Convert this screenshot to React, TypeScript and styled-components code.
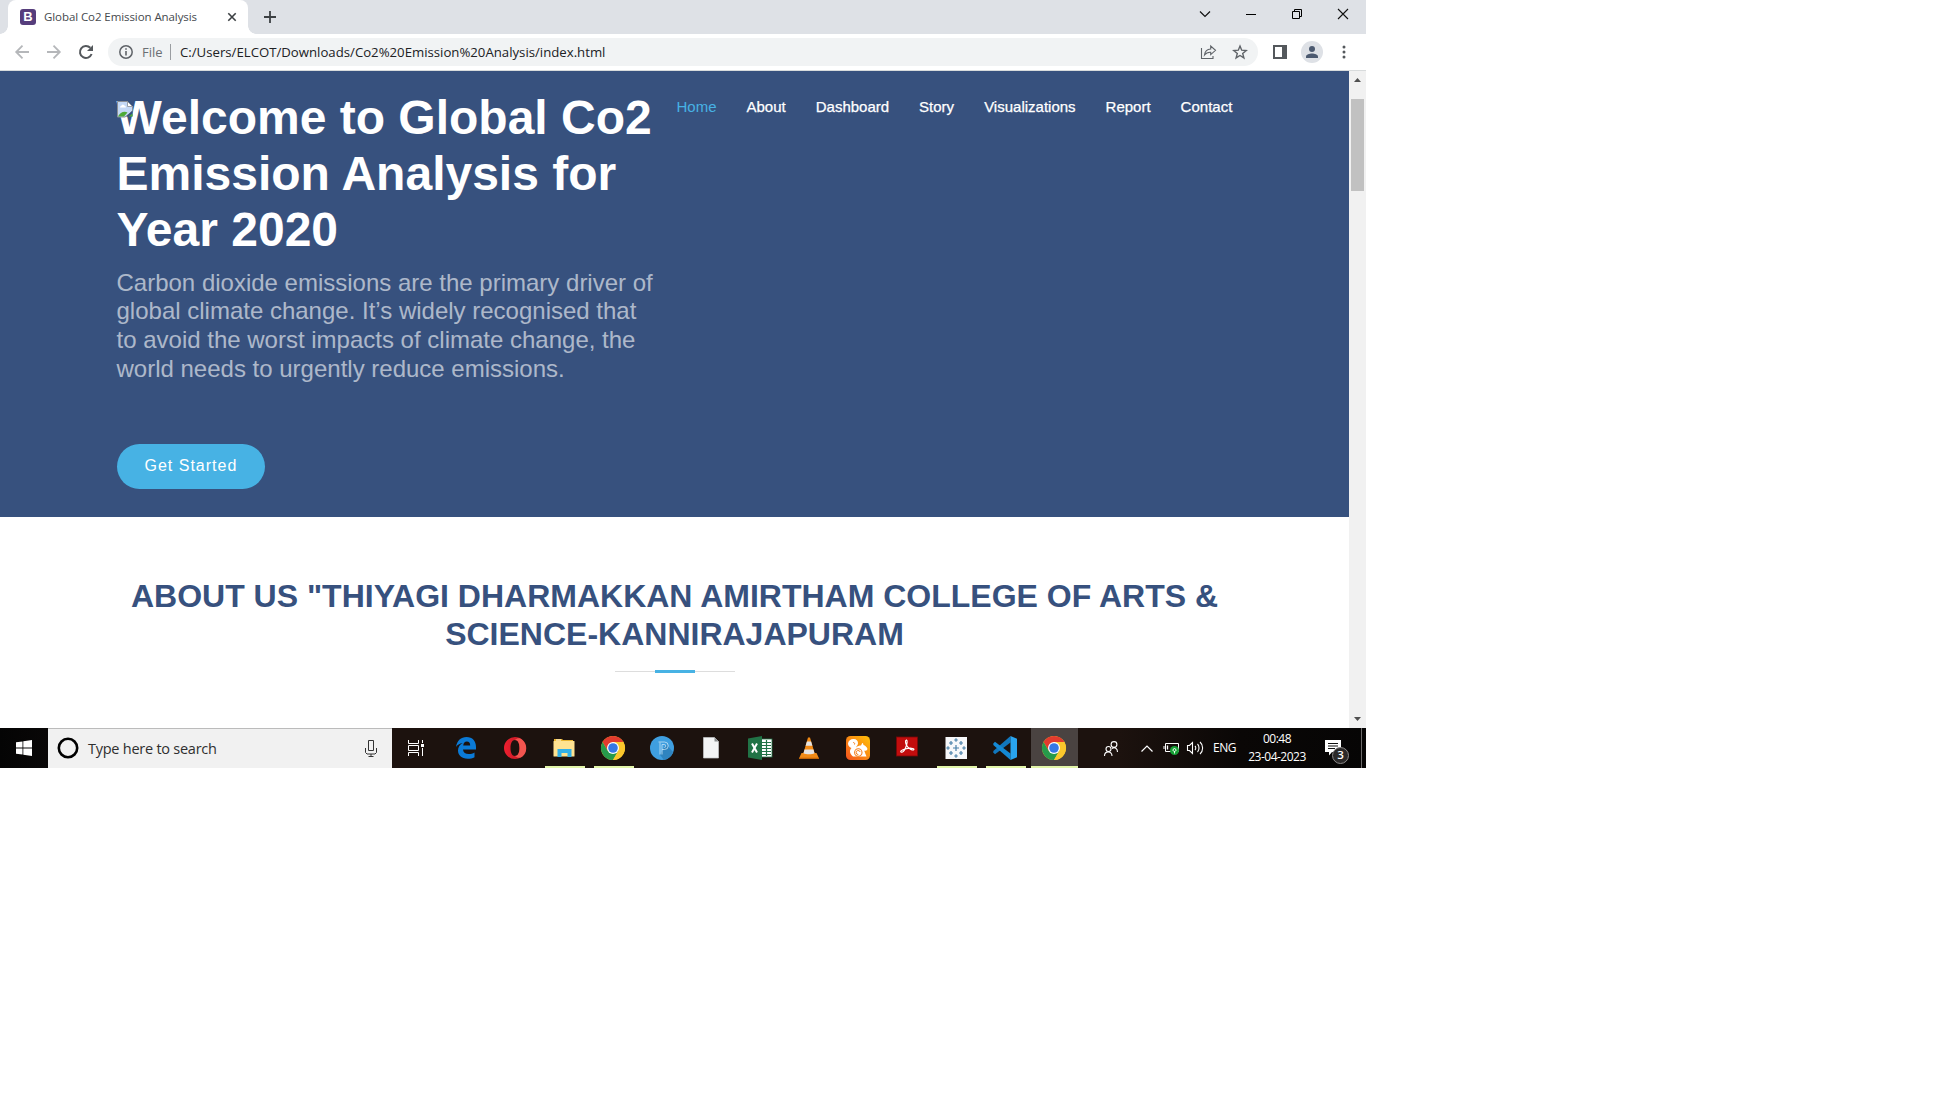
import React from "react";
import styled, { createGlobalStyle } from "styled-components";

const Global = createGlobalStyle`
  * { box-sizing: border-box; }
  body { margin: 0; background: #fff; }
  svg { display: block; flex: none; overflow: visible; }
`;

const UI = `"Open Sans", "Noto Sans", sans-serif`;
const PAGE = `"Liberation Sans", Arial, sans-serif`;

const Desktop = styled.div`
  width: 1366px;
  height: 768px;
  display: flex;
  flex-direction: column;
  overflow: hidden;
  font-family: ${UI};
`;

/* ---------- browser chrome ---------- */
const TabStrip = styled.div`
  height: 34px;
  flex: none;
  background: #dee1e6;
  display: flex;
  align-items: stretch;
  padding-left: 8px;
`;
const Tab = styled.div`
  position: relative;
  width: 240px;
  background: #fff;
  border-radius: 8px 8px 0 0;
  display: flex;
  align-items: center;
  padding: 0 12px;
  &::before,
  &::after {
    content: "";
    position: absolute;
    bottom: 0;
    width: 8px;
    height: 8px;
  }
  &::before {
    left: -8px;
    background: radial-gradient(circle at 0 0, transparent 7.5px, #fff 8px);
  }
  &::after {
    right: -8px;
    background: radial-gradient(circle at 100% 0, transparent 7.5px, #fff 8px);
  }
`;
const Favicon = styled.span`
  width: 16px;
  height: 16px;
  border-radius: 3px;
  background: #563d7c;
  color: #fff;
  font: bold 13px/16px ${PAGE};
  text-align: center;
`;
const TabTitle = styled.span`
  margin-left: 8px;
  flex: 1;
  font-size: 11.5px;
  letter-spacing: -0.08px;
  line-height: 16px;
  color: #45494d;
  white-space: nowrap;
`;
const NewTab = styled.div`
  display: flex;
  align-items: center;
  margin-left: 16px;
`;
const WindowButtons = styled.div`
  margin-left: auto;
  display: flex;
  height: 28px;
  & > span {
    width: 46px;
    display: flex;
    align-items: center;
    justify-content: center;
  }
`;
const Toolbar = styled.div`
  height: 37px;
  flex: none;
  display: flex;
  align-items: center;
  background: #fff;
  border-bottom: 1px solid #d8dbdc;
  padding: 0 15px;
`;
const NavIcons = styled.div`
  display: flex;
  gap: 18px;
  width: 93px;
`;
const Omnibox = styled.div`
  width: 1150px;
  height: 28px;
  border-radius: 14px;
  background: #f1f3f4;
  display: flex;
  align-items: center;
  padding: 0 11px;
`;
const Scheme = styled.span`
  margin-left: 9px;
  width: 28px;
  font-size: 13px;
  letter-spacing: 0;
  color: #6b6f73;
`;
const Divider = styled.span`
  width: 1px;
  height: 16px;
  background: #9a9da1;
`;
const Url = styled.span`
  margin-left: 9px;
  flex: 1;
  font-size: 13.2px;
  letter-spacing: 0;
  color: #202124;
`;
const OmniActions = styled.div`
  display: flex;
  gap: 16px;
`;
const ToolbarEnd = styled.div`
  display: flex;
  align-items: center;
  margin-left: 15px;
`;
const Avatar = styled.span`
  width: 22px;
  height: 22px;
  margin: 0 19px 0 14px;
  border-radius: 50%;
  background: #dee1e6;
  display: flex;
  align-items: center;
  justify-content: center;
`;

/* ---------- web page ---------- */
const Viewport = styled.div`
  height: 657px;
  flex: none;
  display: flex;
`;
const Page = styled.main`
  width: 1349px;
  font-family: ${PAGE};
  background: #fff;
`;
const Hero = styled.section`
  height: 446px;
  background: #37517e;
  display: flex;
  padding: 19px 116px 0 116.5px;
`;
const HeroCopy = styled.div`
  position: relative;
  width: 546px;
`;
const BrokenImage = styled.span`
  position: absolute;
  left: 0;
  top: 11px;
`;
const HeroTitle = styled.h1`
  margin: 0 0 10.6px;
  font-size: 48px;
  line-height: 56px;
  font-weight: 700;
  color: #fff;
`;
const HeroText = styled.p`
  margin: 0;
  font-size: 24px;
  line-height: 28.8px;
  color: rgba(255, 255, 255, 0.6);
`;
const Button = styled.a`
  display: inline-block;
  margin-top: 60px;
  height: 45px;
  padding: 10px 28px;
  border-radius: 50px;
  background: #47b2e4;
  color: #fff;
  font-size: 16px;
  line-height: 24px;
  letter-spacing: 1px;
`;
const Nav = styled.nav`
  display: flex;
  margin: 8px 0 0 14px;
  gap: 30px;
  height: 18px;
`;
const NavLink = styled.a<{ $active?: boolean }>`
  font-size: 15px;
  line-height: 18px;
  -webkit-text-stroke: ${(p) => (p.$active ? "0" : "0.25px #fff")};
  color: ${(p) => (p.$active ? "#47b2e4" : "#fff")};
`;
const About = styled.section`
  display: flex;
  flex-direction: column;
  align-items: center;
  padding-top: 60px;
`;
const SectionTitle = styled.h2`
  margin: 0 0 16px;
  width: 1125px;
  font-size: 32px;
  line-height: 38.4px;
  font-weight: 700;
  text-align: center;
  color: #37517e;
`;
const Rule = styled.div`
  width: 120px;
  height: 3px;
  margin-left: 1px;
  display: flex;
  justify-content: center;
  background: linear-gradient(#fff 1px, #ddd 1px, #ddd 2px, #fff 2px);
  &::before {
    content: "";
    width: 40px;
    background: #47b2e4;
  }
`;
const Scrollbar = styled.div`
  width: 17px;
  background: #f1f1f1;
  display: flex;
  flex-direction: column;
  align-items: center;
`;
const ScrollArrow = styled.span<{ $down?: boolean }>`
  margin: ${(p) => (p.$down ? "auto 0 7px" : "7px 0 0")};
  width: 7px;
  height: 4px;
  background: #505050;
  clip-path: ${(p) => (p.$down ? "polygon(0 0, 100% 0, 50% 100%)" : "polygon(50% 0, 100% 100%, 0 100%)")};
`;
const Thumb = styled.span`
  margin-top: 17px;
  width: 13px;
  height: 92px;
  background: #c1c1c1;
`;

/* ---------- taskbar ---------- */
const Taskbar = styled.footer`
  height: 40px;
  flex: none;
  display: flex;
  background: linear-gradient(90deg, #040404 0, #090707 48px, #1c120e 392px, #1c120e 1120px, #0a0706 1240px, #060505 100%);
`;
const StartButton = styled.div`
  width: 48px;
  display: flex;
  align-items: center;
  justify-content: center;
`;
const Search = styled.div`
  width: 344px;
  background: #f1f1f1;
  border-top: 1px solid #bbb;
  display: flex;
  align-items: center;
  padding: 0 15px 1px 9px;
`;
const SearchText = styled.span`
  flex: 1;
  margin-left: 9px;
  font-size: 14.5px;
  letter-spacing: -0.25px;
  color: #2f2f2f;
`;
const TaskView = styled.div`
  width: 50px;
  display: flex;
  align-items: center;
  padding-left: 16px;
`;
const TaskButton = styled.div<{ $open?: boolean; $active?: boolean }>`
  width: ${(p) => (p.$active ? 47 : 49)}px;
  margin: ${(p) => (p.$active ? "0 1px" : "0")};
  background: ${(p) => (p.$active ? "#4a4341" : "transparent")};
  display: flex;
  flex-direction: column;
  align-items: center;
  padding-top: 8px;
  & > svg {
    margin-right: 1px;
  }
  &::after {
    content: "";
    margin-top: auto;
    width: ${(p) => (p.$active ? 47 : 40)}px;
    height: 2px;
    background: ${(p) => (p.$open || p.$active ? "#e2f5a9" : "transparent")};
  }
`;
const Tray = styled.div`
  flex: 1;
  display: flex;
  align-items: center;
  padding-left: 25px;
  color: #fff;
`;
const TrayIcon = styled.span<{ $w: number }>`
  width: ${(p) => p.$w}px;
`;
const Lang = styled.span`
  width: 33px;
  font-size: 12px;
  letter-spacing: -0.45px;
  margin-bottom: 1px;
`;
const Clock = styled.div`
  width: 62px;
  margin-right: 2px;
  text-align: center;
  font-size: 12px;
  line-height: 18px;
  letter-spacing: -0.5px;
  white-space: nowrap;
`;
const Notice = styled.div`
  position: relative;
  margin-left: 15px;
  width: 36px;
  height: 16px;
`;
const Count = styled.span`
  position: absolute;
  left: 7px;
  top: 7px;
  width: 17px;
  height: 17px;
  border-radius: 50%;
  border: 1px solid #8b8989;
  background: #2b2929;
  font-size: 11.5px;
  font-weight: 600;
  line-height: 14px;
  text-align: center;
`;
const ShowDesktop = styled.span`
  width: 1px;
  height: 40px;
  background: #6d6b6b;
`;

/* ---------- icons ---------- */
const Svg = ({ s = 24, w, h, children }: { s?: number; w?: number; h?: number; children: React.ReactNode }) => (
  <svg width={w ?? s} height={h ?? s} viewBox={`0 0 ${w ?? s} ${h ?? s}`} fill="none">
    {children}
  </svg>
);

const Back = ({ flip }: { flip?: boolean }) => (
  <Svg s={14}>
    <path d="M14 7H1.5M7.5 .7L1.2 7l6.3 6.3" stroke="#b5b7ba" strokeWidth="1.8" transform={flip ? "matrix(-1 0 0 1 14 0)" : undefined} />
  </Svg>
);
const Reload = () => (
  <Svg s={14}>
    <path d="M12.6 9A6 6 0 1 1 11.3 2.8" stroke="#54585c" strokeWidth="2" />
    <path d="M14 0v6H8z" fill="#54585c" />
  </Svg>
);
const Info = () => (
  <Svg s={14}>
    <circle cx="7" cy="7" r="6.2" stroke="#5f6368" strokeWidth="1.5" />
    <path d="M7 6v4.5M7 3.3v1.5" stroke="#5f6368" strokeWidth="1.6" />
  </Svg>
);
const Share = () => (
  <Svg w={16} h={14}>
    <path d="M.5 3v10.500h11.500V11" stroke="#5f6368" strokeWidth="1.1" />
    <path d="M3.500 10C4 6 6.300 4.200 9.700 4V1l4.800 4.300-4.800 4.300V7.200C7 7 5 8 3.500 10z" stroke="#5f6368" strokeWidth="1.1" />
  </Svg>
);
const Star = () => (
  <Svg s={14}>
    <path d="M7 1l1.700 4.200 4.500.300-3.500 2.900 1.200 4.500L7 10.500l-3.900 2.400 1.200-4.500L.8 5.500l4.500-.300z" stroke="#5f6368" strokeWidth="1.4" />
  </Svg>
);
const Chrome = () => (
  <Svg>
    <circle cx="12" cy="12" r="12" fill="#fbc72c" />
    <path d="M12 6h10.400A12 12 0 0 0 1.600 6L6.800 15z" fill="#e23b2e" />
    <path d="M1.600 6A12 12 0 0 0 12 24l5.200-9L12 12 6.800 15z" fill="#269a4b" />
    <path d="M12 24l5.200-9a6 6 0 0 0 0-6L16 6h6.400A12 12 0 0 1 12 24z" fill="#fbc72c" />
    <circle cx="12" cy="12" r="6" fill="#fff" />
    <circle cx="12" cy="12" r="4.800" fill="#3578e5" />
  </Svg>
);
const Edge = () => (
  <Svg>
    <path d="M2 11C3 4.500 7 1 12.500 1 18.500 1 22 5 22 11v2.500H9c.2 3 2.500 4.500 5.800 4.500 2.200 0 4-.5 5.700-1.500v4.700c-1.900 1-4.200 1.500-6.800 1.500C7.400 22.700 4 19 4 14.500c0-3.300 1.800-6 4.800-7.500C5.500 7.500 3.300 9 2 11zm7.200-1.500h7c0-2.700-1.200-4-3.300-4s-3.400 1.500-3.700 4z" fill="#0b7ad6" />
  </Svg>
);
const Opera = () => (
  <Svg>
    <defs>
      <linearGradient id="op" x1="0" x2="1"><stop stopColor="#f01f2f" /><stop offset="1" stopColor="#b01822" /></linearGradient>
    </defs>
    <path fillRule="evenodd" d="M12 1a11 11 0 1 0 0 22 11 11 0 0 0 0-22zm0 3c3 0 4.500 3.500 4.500 8S15 20 12 20s-4.500-3.500-4.500-8S9 4 12 4z" fill="url(#op)" />
    <path d="M12 4c3 0 4.500 3.500 4.500 8s-1.500 8-4.500 8c2 2 5 2.500 7.500.500A11 11 0 0 0 19.500 4C17 1.500 14 2 12 4z" fill="#f2554f" />
  </Svg>
);
const Explorer = () => (
  <Svg>
    <path d="M2 3h8l1 1h10v2H2z" fill="#e9b52f" />
    <path d="M4 4h5" stroke="#fff" strokeWidth="1" />
    <rect x="1.500" y="5" width="21" height="15.500" rx=".5" fill="#ffe391" />
    <path d="M5.500 21v-8h14v8h-4v-4h-6v4z" fill="#33b1e8" />
  </Svg>
);
const PApp = () => (
  <Svg>
    <circle cx="12" cy="12" r="12" fill="#3f9fe0" />
    <path d="M16 8l7 8a12 12 0 0 1-9 8l-4-5z" fill="#2f84bf" />
    <path d="M10 18.500V6.500M12 18.500V8.500M8.500 6h6a3.700 3.700 0 0 1 0 7.500H12M12 8.500h2.300a1.500 1.500 0 0 1 0 3" stroke="#c5e2f5" strokeWidth=".8" />
  </Svg>
);
const Doc = () => (
  <Svg>
    <path d="M4.500 1.500h11l4 4V22h-15z" fill="#f3f4f5" stroke="#c4c7c9" strokeWidth=".7" />
    <path d="M15.500 1.500v4h4z" fill="#8c9092" />
  </Svg>
);
const Excel = () => (
  <Svg>
    <rect x="12" y="3" width="12" height="18" fill="#fff" stroke="#217346" strokeWidth=".8" />
    <path d="M14 6.500h9M14 9.500h9M14 12.500h9M14 15.500h9M14 18.500h9M18.500 4v16" stroke="#217346" strokeWidth="1.200" />
    <path d="M0 2.500L14 0v24L0 21.500z" fill="#217346" />
    <path d="M4 7.500l5 9M9 7.500l-5 9" stroke="#fff" strokeWidth="2" />
  </Svg>
);
const Vlc = () => (
  <Svg>
    <path d="M4.500 17h15l2.500 5.500H2z" fill="#ef8a17" />
    <path d="M2 22.300h20" stroke="#c96706" strokeWidth="1.200" />
    <path d="M11 1.500h2l5 17c-2.500 1.800-9.500 1.800-12 0z" fill="#f28a15" />
    <path d="M9.900 5.500h4.200l1.300 4.200H8.600zM7.500 13.500h9l1 3.700c-2.500 1.500-8.500 1.500-11 0z" fill="#e3e3e3" />
  </Svg>
);
const Uc = () => (
  <Svg>
    <defs>
      <linearGradient id="uc" x1="0" x2="1" y1="1" y2="0"><stop stopColor="#f4511e" /><stop offset="1" stopColor="#ffc107" /></linearGradient>
    </defs>
    <rect width="24" height="24" rx="4.500" fill="url(#uc)" />
    <path d="M7 20.500C3 17 3.500 14 5.500 12 4 11.500 2 10 2 7.500 2.500 4.500 4.500 3 7.500 3c3 0 4.500 1.800 4.500 4.200 0 1.800-1.500 2.800-2 4.300 1.500-1.500 3.500-2 5-2L16 7.500c.3-.6.800-.9 1-.2l.5 1.700c1.800.5 3.300 2 4 4-.3 1.300-1.500 1.800-3.300 1.800.8 1.700 1.300 3.500 2.300 5.700z" fill="#fff" />
    <circle cx="12.300" cy="16.500" r="3.700" stroke="#f5801f" strokeWidth="1.100" />
    <path d="M12.300 18.500a2 2 0 1 1 1.800-2.500" stroke="#f5801f" strokeWidth="1" />
    <path d="M7.200 6.500c1.200 0 1.800.8 1.300 2" stroke="#f5801f" strokeWidth="1" />
  </Svg>
);
const Acrobat = () => (
  <Svg>
    <rect x="1.500" y="1" width="21" height="19" fill="#c20d0d" stroke="#7a0808" strokeWidth=".8" />
    <path d="M11.500 4c1.500 1 0 5.500-1 8s-3 5-4.500 4 3-3.200 7-3.700 6.500.500 5.800 1.400-5-.500-6.800-3.700-2-5.700-.500-6z" stroke="#fff" strokeWidth="1.200" />
  </Svg>
);
const crosses: [number, number, number][] = [[12, 12, 3], [12, 4, 1.8], [12, 20, 1.8], [4, 12, 1.8], [20, 12, 1.8], [7, 7, 2], [17, 7, 2], [7, 17, 2], [17, 17, 2]];
const Tableau = () => (
  <Svg>
    <rect x="1.500" y="1" width="21.500" height="22" fill="#f7f8fa" />
    {crosses.map(([x, y, r]) => (
      <path key={`${x}-${y}`} d={`M${x - r} ${y}h${2 * r}M${x} ${y - r}v${2 * r}`} stroke="#487fa8" strokeWidth="1.200" />
    ))}
  </Svg>
);
const Code = () => (
  <Svg>
    <path d="M17.500 6.500L2 18.300.3 16.500v-1.500L17.500 0z" fill="#1177bd" />
    <path d="M17.500 17.500L2 5.700.3 7.500V9l17.200 15z" fill="#1489d4" />
    <path d="M17.500 0L24 2.700v18.600L17.500 24z" fill="#29a4ee" />
  </Svg>
);

const apps = [
  { Icon: Edge },
  { Icon: Opera },
  { Icon: Explorer, open: true },
  { Icon: Chrome, open: true },
  { Icon: PApp },
  { Icon: Doc },
  { Icon: Excel },
  { Icon: Vlc },
  { Icon: Uc },
  { Icon: Acrobat },
  { Icon: Tableau, open: true },
  { Icon: Code, open: true },
  { Icon: Chrome, active: true },
];

const links = ["Home", "About", "Dashboard", "Story", "Visualizations", "Report", "Contact"];

export default function App() {
  return (
    <Desktop>
      <Global />
      <TabStrip>
        <Tab>
          <Favicon>B</Favicon>
          <TabTitle>Global Co2 Emission Analysis</TabTitle>
          <Svg s={8}><path d="M.3.3l7.400 7.400M7.700.3L.3 7.700" stroke="#3c4043" strokeWidth="1.600" /></Svg>
        </Tab>
        <NewTab>
          <Svg s={12}><path d="M6 0v12M0 6h12" stroke="#3c4043" strokeWidth="1.800" /></Svg>
        </NewTab>
        <WindowButtons>
          <span><Svg w={10} h={6}><path d="M0 .5l5 5 5-5" stroke="#111" strokeWidth="1.200" /></Svg></span>
          <span><Svg w={10} h={1}><path d="M0 .5h10" stroke="#000" /></Svg></span>
          <span><Svg s={10}><path d="M.5 2.500h7v7h-7zM2.500 2.500v-2h7v7h-2" stroke="#000" /></Svg></span>
          <span><Svg s={10}><path d="M0 0l10 10M10 0L0 10" stroke="#111" strokeWidth="1.100" /></Svg></span>
        </WindowButtons>
      </TabStrip>
      <Toolbar>
        <NavIcons><Back /><Back flip /><Reload /></NavIcons>
        <Omnibox>
          <Info />
          <Scheme>File</Scheme>
          <Divider />
          <Url>C:/Users/ELCOT/Downloads/Co2%20Emission%20Analysis/index.html</Url>
          <OmniActions><Share /><Star /></OmniActions>
        </Omnibox>
        <ToolbarEnd>
          <Svg s={14}><path d="M0 0h14v14H0zM2 2v10h7V2z" fill="#54585c" fillRule="evenodd" /></Svg>
          <Avatar>
            <Svg s={12}><circle cx="6" cy="3" r="3" fill="#4c5a70" /><path d="M0 12v-1.500C0 8.500 3.500 7.500 6 7.500s6 1 6 3V12z" fill="#4c5a70" /></Svg>
          </Avatar>
          <Svg w={4} h={14}>{[2, 7, 12].map((y) => <circle key={y} cx="2" cy={y} r="1.500" fill="#54585c" />)}</Svg>
        </ToolbarEnd>
      </Toolbar>
      <Viewport>
        <Page>
          <Hero>
            <HeroCopy>
              <HeroTitle>Welcome to Global Co2 Emission Analysis for Year 2020</HeroTitle>
              <BrokenImage>
                <Svg s={16}>
                  <path d="M.5.5h10l5 5v5L8 16H.5z" fill="#c4d8f5" stroke="#8b8f94" />
                  <path d="M10.500.5v5h5z" fill="#fff" stroke="#8b8f94" strokeWidth=".8" />
                  <path d="M3 6.500c0-2 2-1.500 2.500-3 1.500 0 2 1.500 3 1.700.700.500.500 1.300 0 1.300z" fill="#fff" />
                  <path d="M1 15.500c2-4 6-6 9.500-4L7 15.500z" fill="#4daa37" />
                  <path d="M9 15.500l6.500-6v6z" fill="#37517e" />
                  <path d="M11.500 15.500h4v-3z" fill="#4daa37" />
                </Svg>
              </BrokenImage>
              <HeroText>
                Carbon dioxide emissions are the primary driver of global climate change. It’s widely recognised that to avoid the
                worst impacts of climate change, the world needs to urgently reduce emissions.
              </HeroText>
              <Button>Get Started</Button>
            </HeroCopy>
            <Nav>
              {links.map((l, i) => <NavLink key={l} $active={i === 0}>{l}</NavLink>)}
            </Nav>
          </Hero>
          <About>
            <SectionTitle>ABOUT US "THIYAGI DHARMAKKAN AMIRTHAM COLLEGE OF ARTS &amp; SCIENCE-KANNIRAJAPURAM</SectionTitle>
            <Rule />
          </About>
        </Page>
        <Scrollbar>
          <ScrollArrow />
          <Thumb />
          <ScrollArrow $down />
        </Scrollbar>
      </Viewport>
      <Taskbar>
        <StartButton>
          <Svg s={16}><path d="M0 2.300L6.500 1.400V7.500H0zM7.300 1.300L16 0v7.500H7.300zM0 8.400h6.500v6.200L0 13.700zM7.300 8.400H16V16l-8.700-1.300z" fill="#fff" /></Svg>
        </StartButton>
        <Search>
          <Svg s={22}><circle cx="11" cy="11" r="9.200" stroke="#000" strokeWidth="2.600" /></Svg>
          <SearchText>Type here to search</SearchText>
          <Svg w={12} h={17}><path d="M3.500.5h5v10h-5zM.5 8v4.500l1.500 1.500h8l1.500-1.500V8M6 14v2.500M3.500 16.500h5" stroke="#333" /></Svg>
        </Search>
        <TaskView>
          <Svg w={16} h={16}>
            <path d="M.5 0v3.500h10V0M.5 16v-3.500h10V16M.5 5.500h10v5H.5zM14.500 0v3M14.500 8v8" stroke="#fff" />
            <rect x="13" y="4" width="3" height="3" fill="#fff" />
          </Svg>
        </TaskView>
        {apps.map(({ Icon, open, active }, i) => (
          <TaskButton key={i} $open={open} $active={active}><Icon /></TaskButton>
        ))}
        <Tray>
          <TrayIcon $w={37}>
            <Svg w={14} h={15}>
              <circle cx="10" cy="3.500" r="2.900" stroke="#fff" strokeWidth="1.100" />
              <circle cx="4.500" cy="8" r="2.500" stroke="#fff" strokeWidth="1.100" />
              <path d="M.5 15c0-5.500 7.500-5.500 7.500 0M8 7.500c3-2 5.500 0 5.500 3.500" stroke="#fff" strokeWidth="1.100" />
            </Svg>
          </TrayIcon>
          <TrayIcon $w={23}><Svg w={12} h={7}><path d="M.5 6.500L6 1l5.500 5.500" stroke="#fff" strokeWidth="1.200" /></Svg></TrayIcon>
          <TrayIcon $w={23}>
            <Svg w={16} h={10}>
              <path d="M1.500.5h13v8h-13zM0 3v3" stroke="#fff" />
              <path d="M3.500 2.500v4" stroke="#fff" strokeWidth="1.300" />
              <circle cx="10.500" cy="7.500" r="4.500" fill="#16a035" />
              <path d="M10.500 10.500V8M8.700 7.300l1.800-2.300 1.800 2.300-1.800 1.200z" stroke="#fff" strokeWidth=".9" />
            </Svg>
          </TrayIcon>
          <TrayIcon $w={26}>
            <Svg w={17} h={14}><path d="M.5 4.500h2l3-3v11l-3-3h-2zM8 5c1 1 1 3 0 4M10.500 3c2 2 2 6 0 8M13 1c3.500 3 3.500 9 0 12" stroke="#fff" strokeWidth="1.100" /></Svg>
          </TrayIcon>
          <Lang>ENG</Lang>
          <Clock>00:48<br />23-04-2023</Clock>
          <Notice>
            <Svg s={16}>
              <path d="M0 0h16v12H7l-3 3.500V12H0z" fill="#fff" />
              <path d="M3 3.500h10M3 6h10M3 8.500h7" stroke="#111" />
            </Svg>
            <Count>3</Count>
          </Notice>
          <ShowDesktop />
        </Tray>
      </Taskbar>
    </Desktop>
  );
}
